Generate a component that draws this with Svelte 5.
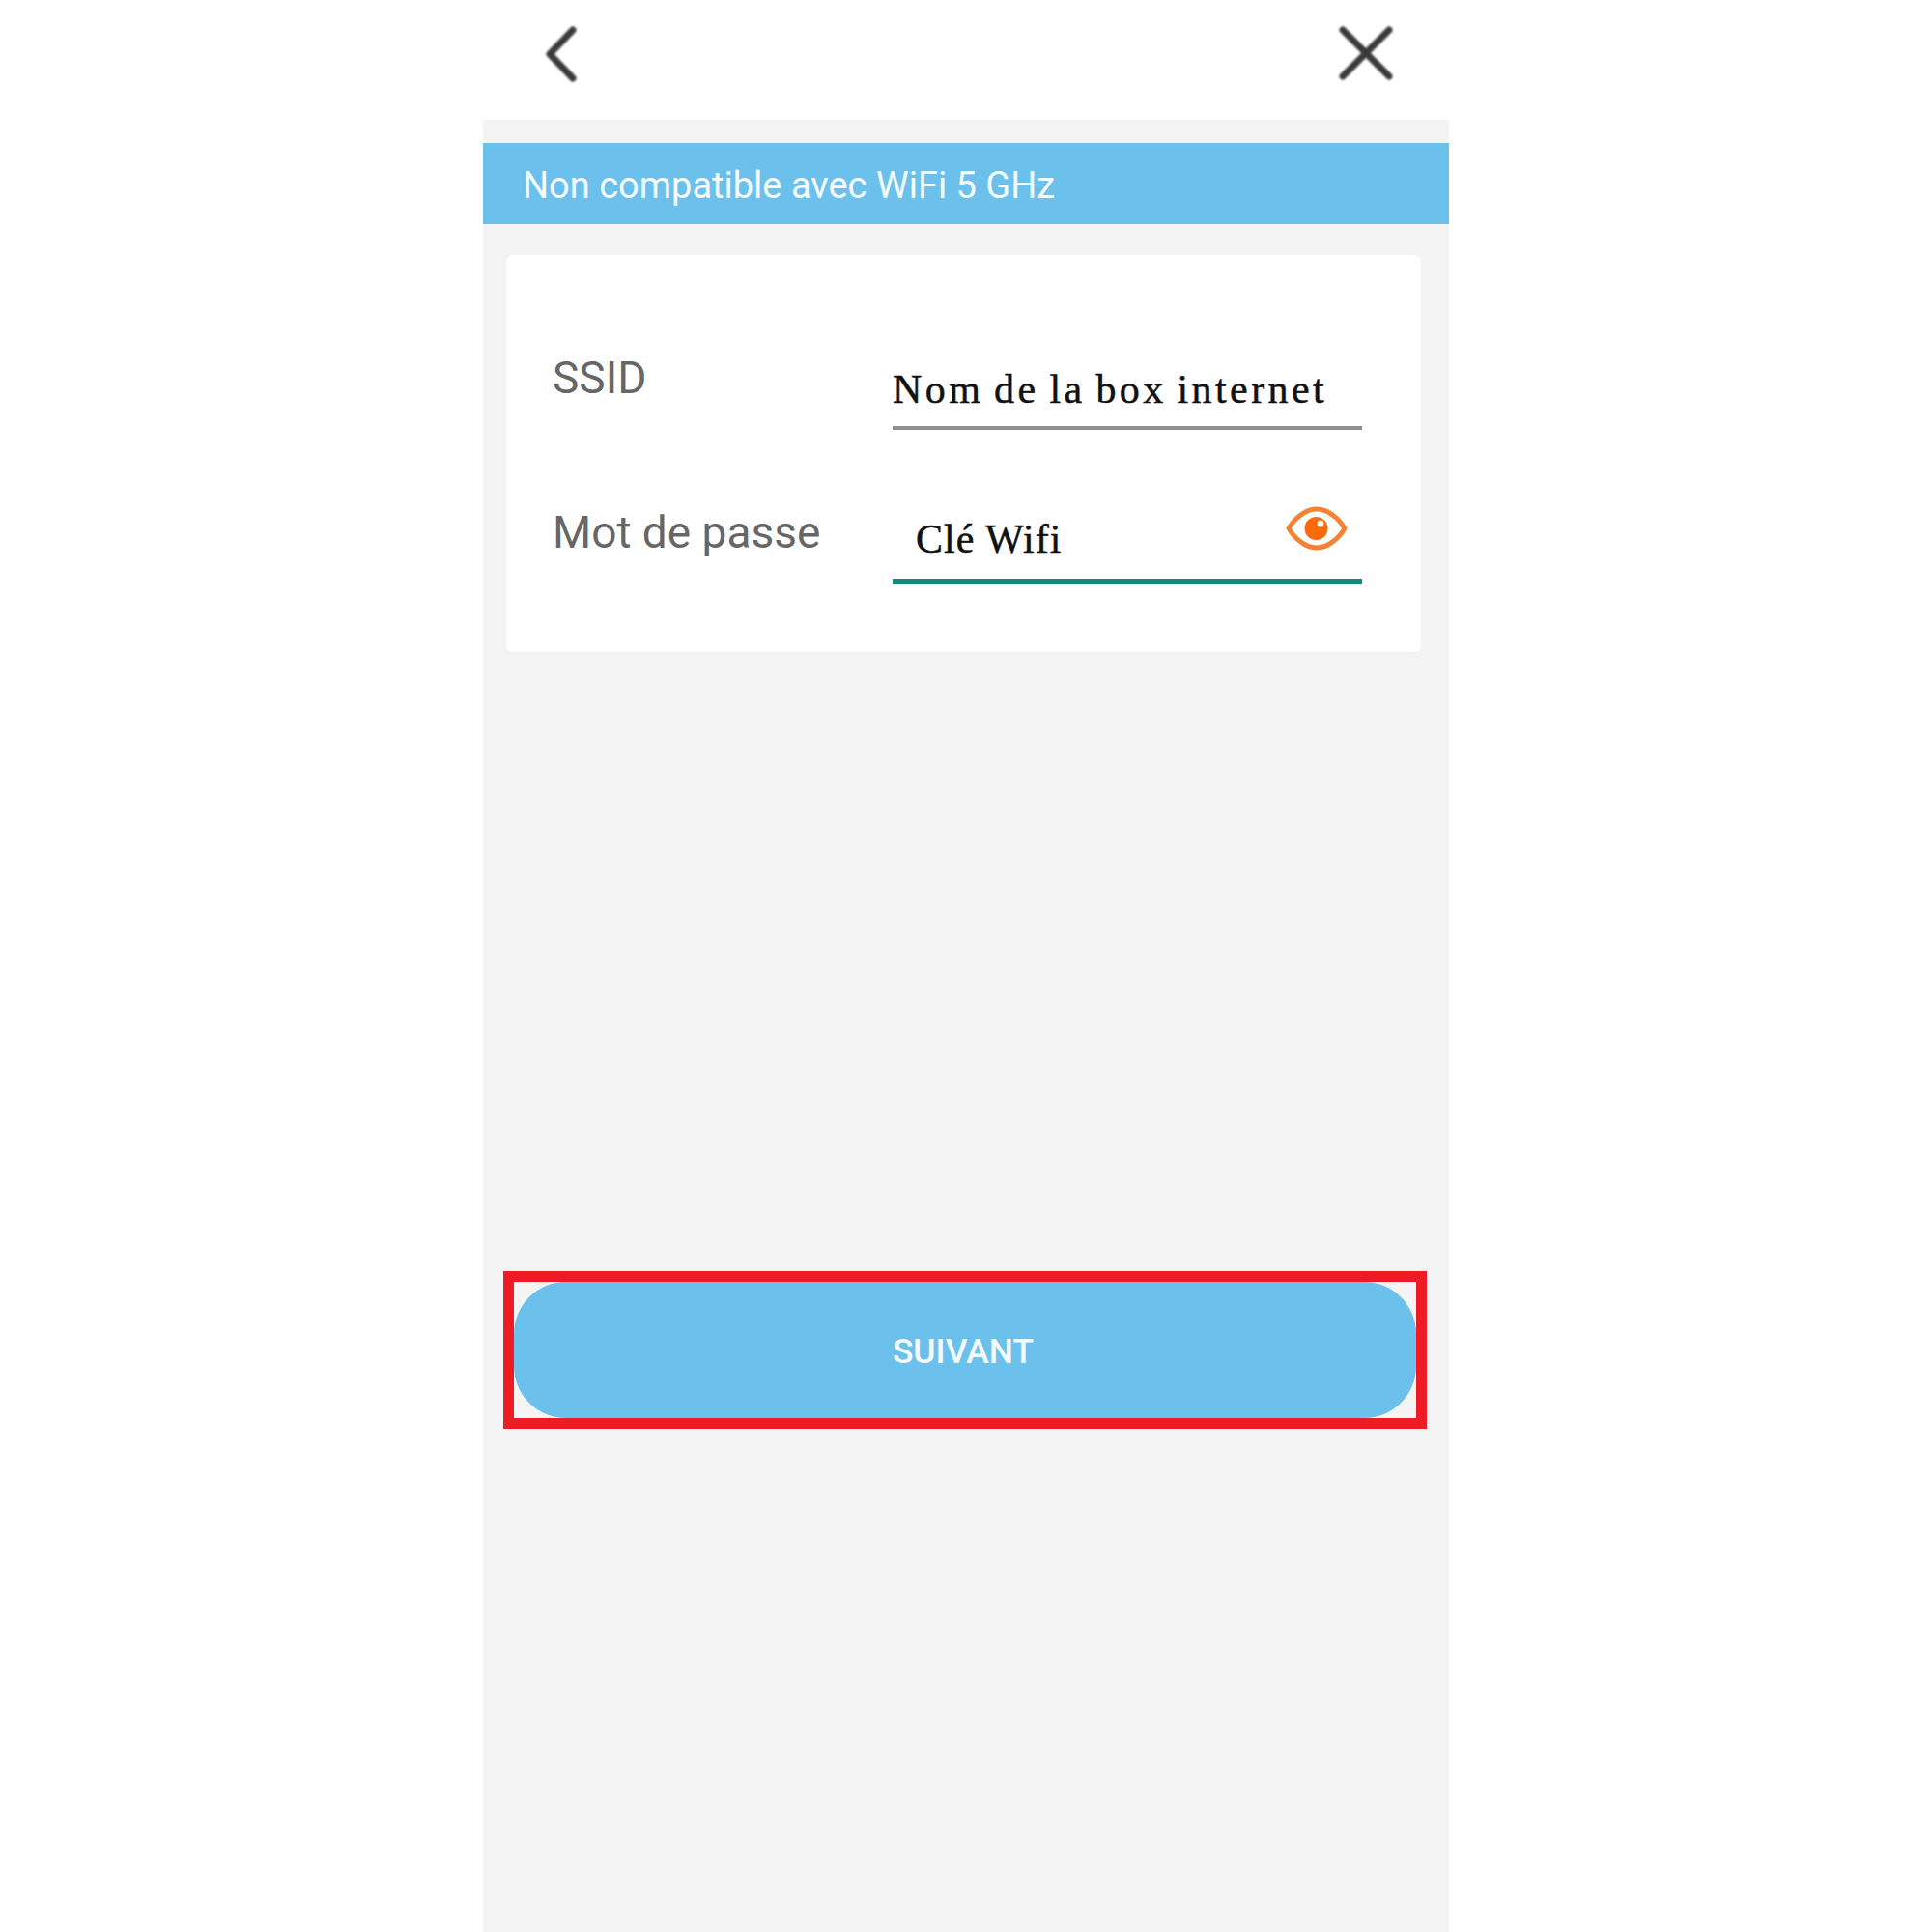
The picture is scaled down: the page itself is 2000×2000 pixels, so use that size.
<script lang="ts">
	let ssid = $state('Nom de la box internet');
	let password = $state('Clé Wifi');
</script>

<div class="screen">
	<header class="topbar">
		<svg class="icon" width="34" height="60" viewBox="0 0 34 60" aria-label="Retour">
			<path d="M29 5 L5 30 L29 55" />
		</svg>
		<svg class="icon" width="58" height="58" viewBox="0 0 58 58" aria-label="Fermer">
			<path d="M5 5 L53 53 M53 5 L5 53" />
		</svg>
	</header>

	<div class="banner">Non compatible avec WiFi 5 GHz</div>

	<section class="card">
		<div class="row">
			<span class="label">SSID</span>
			<div class="field">
				<span class="value ssid">{ssid}</span>
			</div>
		</div>
		<div class="row">
			<span class="label">Mot de passe</span>
			<div class="field focused">
				<span class="value key">{password}</span>
				<svg class="eye" width="64" height="46" viewBox="0 0 64 46" aria-label="Afficher">
					<path class="lid" d="M3 23 C6 18 10 13 15 9.5 C20 5.5 26 3 32 3 C38 3 44 5.5 49 9.5 C54 13 58 18 61 23 C58 28 54 33 49 36.5 C44 40.5 38 43 32 43 C26 43 20 40.5 15 36.5 C10 33 6 28 3 23 Z" />
					<circle class="pupil" cx="31.5" cy="23" r="12" />
					<circle class="glint" cx="36" cy="18" r="3.4" />
				</svg>
			</div>
		</div>
	</section>

	<div class="highlight">
		<button class="next">SUIVANT</button>
	</div>
</div>

<style>
	:global(body) {
		margin: 0;
		background: #fff;
	}

	.screen {
		width: 1000px;
		height: 2000px;
		margin: 0 auto;
		background: #f3f3f3;
		font-family: Roboto, 'Liberation Sans', sans-serif;
		overflow: hidden;
	}

	.topbar {
		height: 124px;
		box-sizing: border-box;
		background: #fff;
		display: flex;
		justify-content: space-between;
		align-items: flex-start;
		padding: 26px 57px 0 64px;
	}

	.icon {
		fill: none;
		stroke: #3a3a3a;
		stroke-width: 7;
		stroke-linecap: round;
		stroke-linejoin: round;
		filter: blur(0.8px);
	}

	.banner {
		margin-top: 24px;
		height: 84px;
		box-sizing: border-box;
		padding-left: 41px;
		background: #6cc0ec;
		color: #f4fbfe;
		font-size: 38px;
		line-height: 88px;
		white-space: nowrap;
	}

	.card {
		margin: 32px 29px 0 24px;
		height: 411px;
		box-sizing: border-box;
		padding: 97px 0 0 48px;
		background: #fff;
		border-radius: 6px;
		display: flex;
		flex-direction: column;
		gap: 76px;
	}

	.row {
		display: flex;
		align-items: flex-start;
	}

	.label {
		width: 352px;
		flex-shrink: 0;
		color: #666;
		font-size: 46px;
		line-height: 60px;
	}

	.field {
		width: 486px;
		height: 84px;
		box-sizing: border-box;
		display: flex;
		justify-content: space-between;
		border-bottom: 4px solid #8f8f8f;
	}

	.field.focused {
		border-bottom: 6px solid #14897a;
	}

	.value {
		font-family: 'Liberation Serif', 'Times New Roman', serif;
		color: #111;
		line-height: 84px;
		white-space: nowrap;
		-webkit-text-stroke: 0.5px #111;
	}

	.ssid {
		font-size: 42px;
		letter-spacing: 3.4px;
		word-spacing: -3px;
	}

	.key {
		padding-left: 24px;
		font-size: 42px;
		line-height: 74px;
		letter-spacing: 1px;
	}

	.eye {
		margin: 3px 15px 0 0;
		filter: blur(0.5px);
	}

	.lid {
		fill: none;
		stroke: #f58233;
		stroke-width: 5;
		stroke-linejoin: round;
	}

	.pupil {
		fill: #fb6a0c;
	}

	.glint {
		fill: #fff;
	}

	.highlight {
		margin: 641px 23px 0 21px;
		height: 163px;
		box-sizing: border-box;
		border: 11.5px solid #ed1c24;
		background: #f4f4f4;
		display: flex;
	}

	.next {
		flex: 1;
		border: none;
		border-radius: 54px;
		background: #6cc0ec;
		color: #f4fbfe;
		font-family: inherit;
		font-size: 35.5px;
		font-weight: 500;
		padding: 2px 4px 0 0;
	}
</style>
